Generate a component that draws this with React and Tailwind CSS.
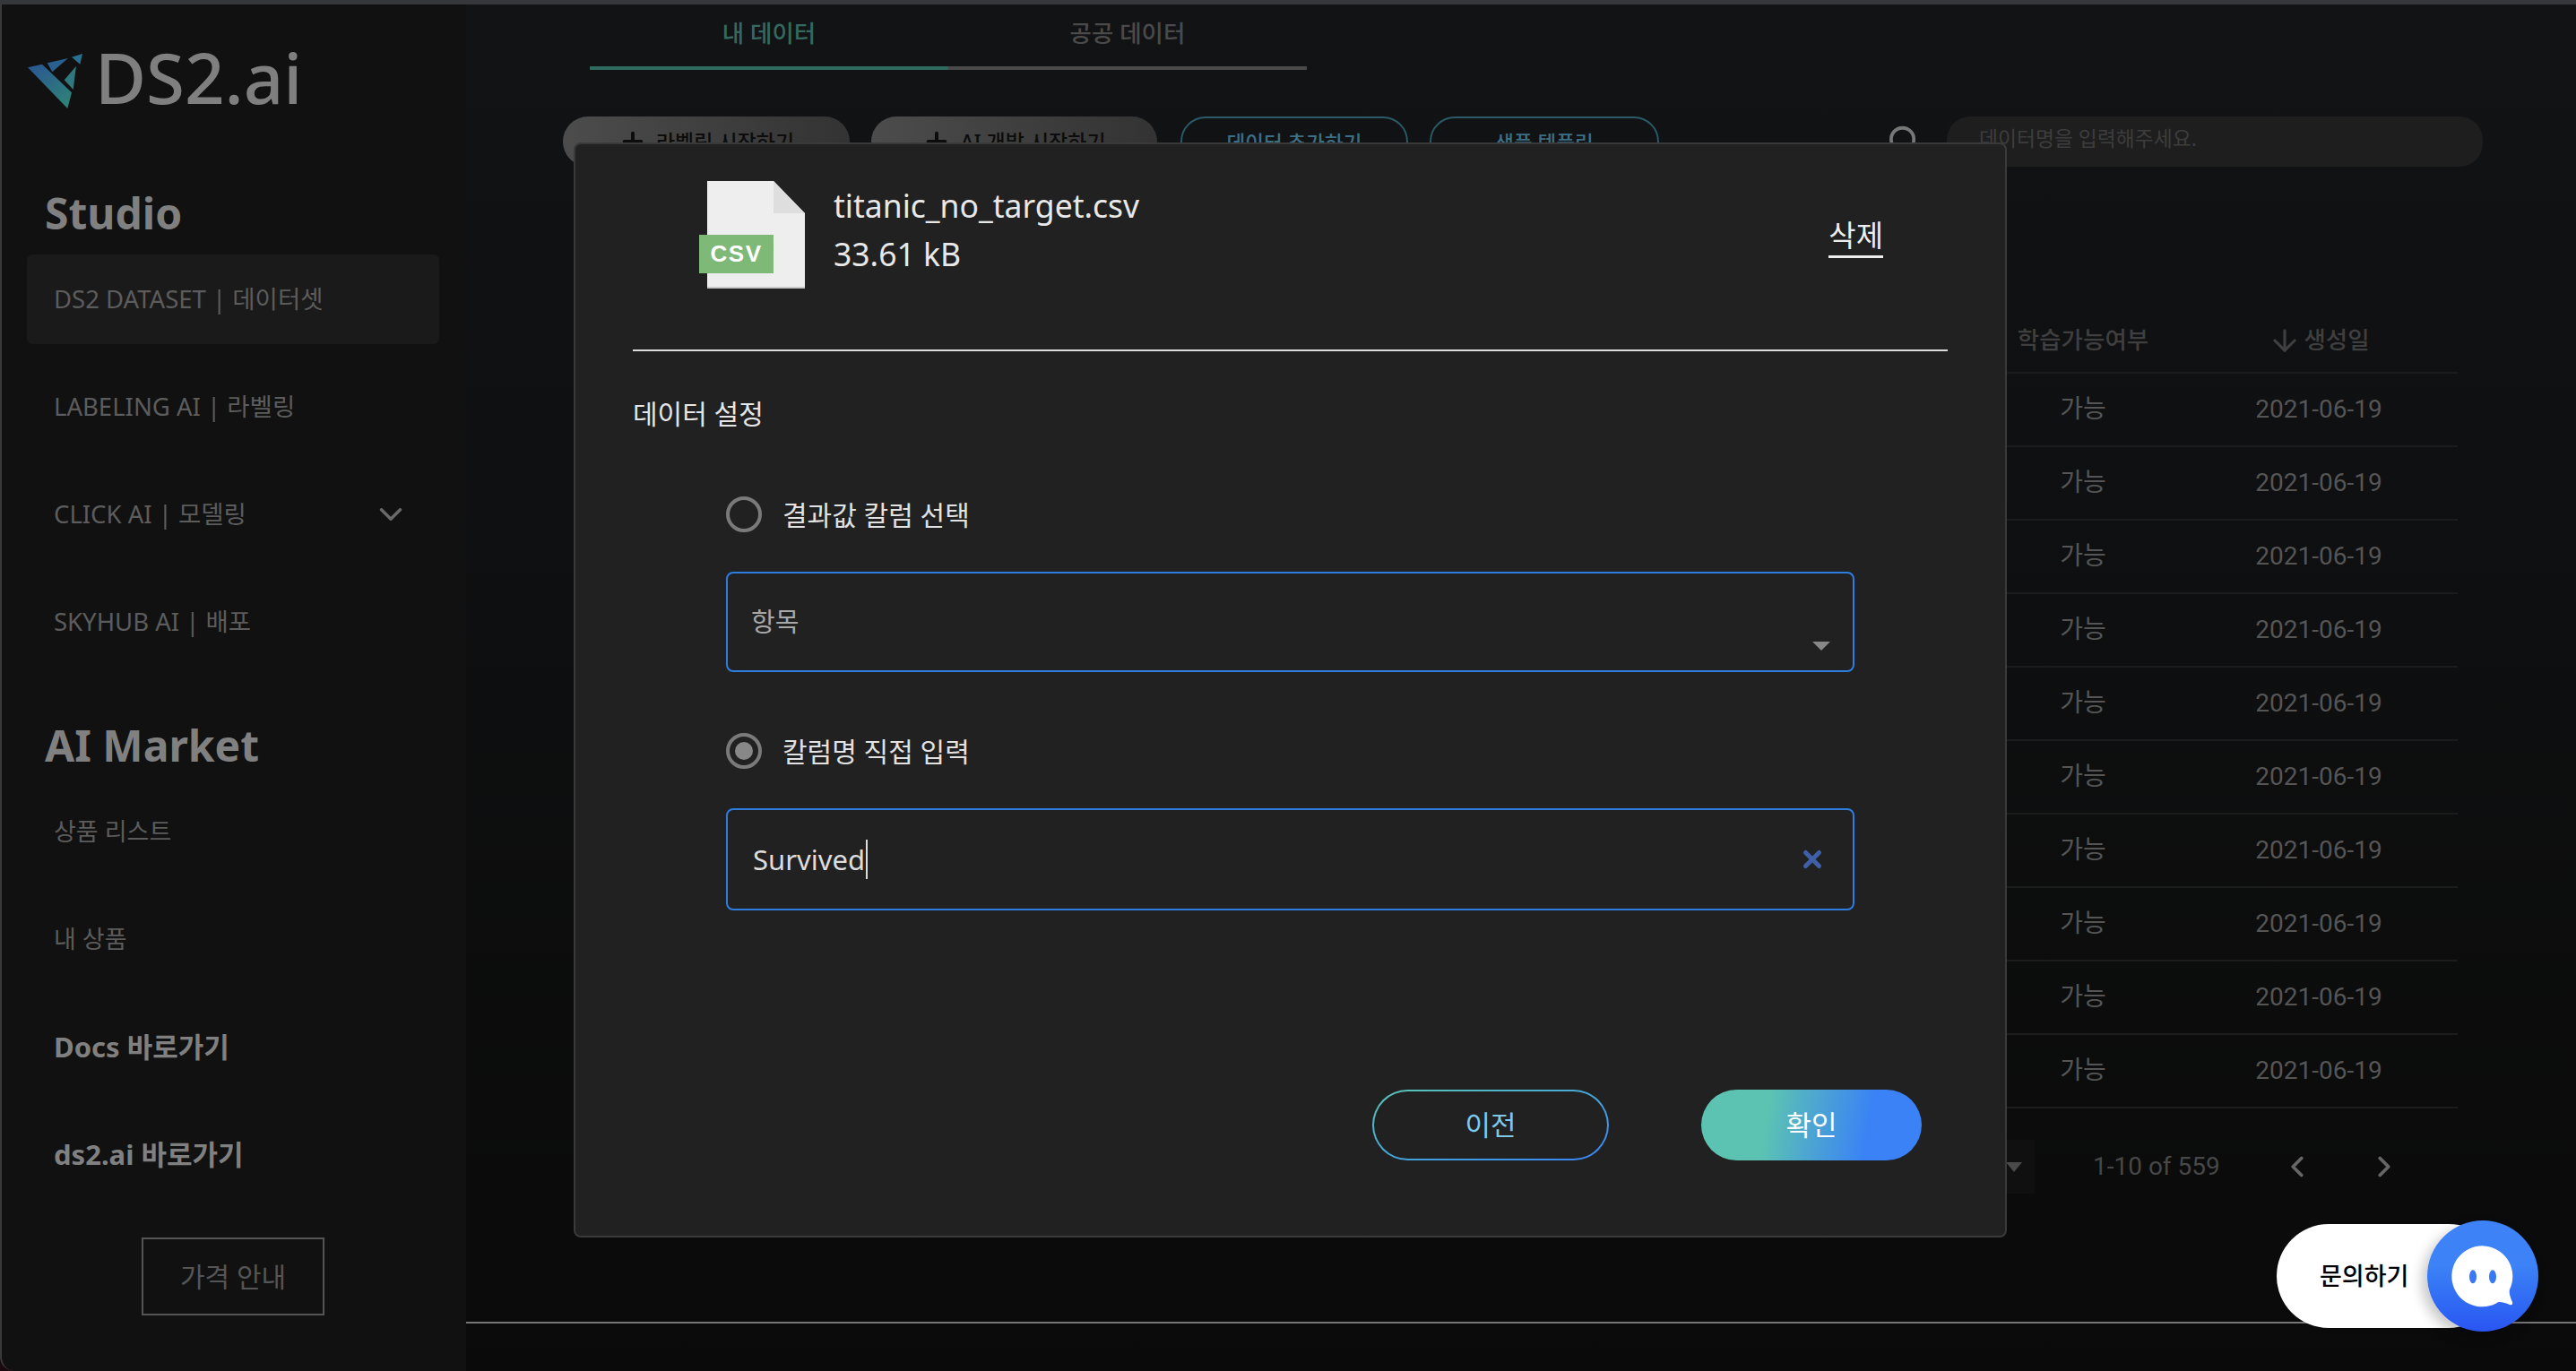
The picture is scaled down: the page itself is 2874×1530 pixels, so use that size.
import { ArrowDown, ChevronDown, ChevronLeft, ChevronRight, Plus, Search, X } from 'lucide-react';

const FONT = "font-['Noto_Sans','Noto_Sans_CJK_KR',sans-serif]";

const navTop = [
  { label: 'DS2 DATASET | 데이터셋', active: true },
  { label: 'LABELING AI | 라벨링' },
  { label: 'CLICK AI | 모델링', arrow: true },
  { label: 'SKYHUB AI | 배포' },
];

const Logo = () => (
  <svg width="64" height="62" viewBox="29 58 64 62" className="shrink-0">
    <defs>
      <linearGradient id="logoGrad" x1="0" y1="0" x2="0.7" y2="1">
        <stop offset="0" stopColor="#2a5594" />
        <stop offset="1" stopColor="#2f8079" />
      </linearGradient>
    </defs>
    <polygon points="30,74.3 46,70.7 79,102.3 74.3,120" fill="url(#logoGrad)" />
    <polygon points="51.7,69.3 75,64 57.3,79.3" fill="#2a6090" />
    <polygon points="79,62.7 91,59 88.3,70.7" fill="#2a7090" />
    <polygon points="84,72.7 80.7,99 70.7,88.3" fill="#2f7880" />
  </svg>
);

const Sidebar = () => (
  <aside className="w-[520px] shrink-0 h-full bg-[#111111] border-l-2 border-[#3a3a3a] rounded-bl-[16px] flex flex-col pl-[28px]">
    <div className="flex items-center h-[62px] mt-[54px] gap-[12px]">
      <Logo />
      <span className="text-[78px] leading-none font-medium text-[#7f7f7f] mt-[-8px]">DS2.ai</span>
    </div>
    <h2 className="text-[48px] leading-[64px] font-bold text-[#808080] ml-[20px] mt-[85px]">Studio</h2>
    <nav className="flex flex-col mt-[14px]">
      {navTop.map((item) => (
        <div
          key={item.label}
          className={`w-[460px] h-[100px] mb-[20px] px-[30px] rounded-[6px] flex items-center justify-between text-[27.5px] text-[#5c5c5c] ${item.active ? 'bg-[#1a1a1a]' : ''}`}
        >
          <span>{item.label}</span>
          {item.arrow && <ChevronDown size={42} strokeWidth={2} className="text-[#6a6a6a] mr-[3px]" />}
        </div>
      ))}
    </nav>
    <h2 className="text-[48px] leading-[64px] font-bold text-[#808080] ml-[20px] mt-[36px]">AI Market</h2>
    <div className="flex flex-col mt-[4px] ml-[30px] text-[27px] text-[#5c5c5c]">
      <div className="h-[120px] flex items-center">상품 리스트</div>
      <div className="h-[120px] flex items-center">내 상품</div>
      <div className="h-[120px] flex items-center text-[31px] font-bold text-[#808080]">Docs 바로가기</div>
      <div className="h-[120px] flex items-center text-[31px] font-bold text-[#808080]">ds2.ai 바로가기</div>
    </div>
    <button className="w-[204px] h-[87px] ml-[128px] mt-[33px] border-2 border-[#555555] text-[30px] text-[#555555]">
      가격 안내
    </button>
  </aside>
);

const GrayAction = ({ width, label }) => (
  <button className={`${width} h-[56px] rounded-[28px] bg-gradient-to-r from-[#4c4c4c] to-[#333333] flex items-start justify-center gap-[10px] pt-[12px] text-[23px] leading-[32px] font-medium text-[#0c0c0c]`}>
    <Plus size={32} strokeWidth={3} />
    <span>{label}</span>
  </button>
);

const OutlineAction = ({ width, label }) => (
  <button className={`${width} h-[56px] rounded-[28px] border-2 border-[#2a5a68] flex items-start justify-center pt-[12px] text-[22.5px] leading-[32px] font-medium text-[#3c6f85]`}>
    {label}
  </button>
);

const Table = () => (
  <div className="ml-[160px] mr-[132px] mt-[159px]">
    <div className="flex h-[72px] border-b-2 border-[#1c1c1c] text-[26.5px] text-[#3f3f3f] font-medium">
      <div className="flex-1" />
      <div className="w-[220px] flex items-center justify-center">학습가능여부</div>
      <div className="w-[308px] flex items-center justify-center gap-[2px] pr-[2px]">
        <ArrowDown size={38} strokeWidth={2} />
        <span>생성일</span>
      </div>
    </div>
    {Array.from({ length: 10 }).map((_, i) => (
      <div key={i} className="flex h-[82px] border-b-2 border-[#1c1c1c] text-[28px] text-[#555555] font-['Roboto','Noto_Sans_CJK_KR',sans-serif]">
        <div className="flex-1" />
        <div className="w-[220px] flex items-center justify-center">가능</div>
        <div className="w-[308px] flex items-center justify-center pr-[2px]">2021-06-19</div>
      </div>
    ))}
  </div>
);

const Pagination = () => (
  <div className="flex items-center h-[60px] mt-[35px] ml-[1500px] font-['Roboto',sans-serif] text-[28px] text-[#474747]">
    <div className="w-[250px] h-[60px] bg-[#101010] flex items-center justify-end pr-[14px]">
      <div className="w-0 h-0 border-x-[9px] border-x-transparent border-t-[11px] border-t-[#4a4a4a]" />
    </div>
    <span className="ml-[65px] w-[140px] whitespace-nowrap">1-10 of 559</span>
    <ChevronLeft size={38} strokeWidth={2.4} className="text-[#666666] ml-[69px]" />
    <ChevronRight size={38} strokeWidth={2.4} className="text-[#666666] ml-[59px]" />
  </div>
);

const FileIcon = () => (
  <div className="relative w-[118px] h-[120px] shrink-0">
    <svg width="118" height="120" viewBox="0 0 118 120" className="absolute inset-0">
      <polygon points="9,0 83,0 118,36 118,120 9,120" fill="#eeeeee" />
      <polygon points="83,0 118,36 83,36" fill="#dedede" />
      <rect x="9" y="118" width="109" height="2" fill="#c9c9c9" />
      <rect x="0" y="60" width="83" height="43" fill="#7eb978" />
    </svg>
    <span className="absolute left-0 top-[60px] w-[83px] h-[43px] flex items-center justify-center text-[26px] font-bold text-white font-['Liberation_Sans',sans-serif] tracking-[1.5px]">
      CSV
    </span>
  </div>
);

const Radio = ({ checked, label }) => (
  <div className="flex items-center gap-[23px] h-[40px]">
    <div className="w-[40px] h-[40px] rounded-full border-4 border-[#7a7a7a] flex items-center justify-center">
      {checked && <div className="w-[20px] h-[20px] rounded-full bg-[#888888]" />}
    </div>
    <span className="text-[30px] text-[#e2e2e2]">{label}</span>
  </div>
);

const Modal = () => (
  <div className="absolute left-[640px] top-[159px] w-[1599px] h-[1222px] bg-[#212121] border-2 border-[#3a3a3a] rounded-[8px] flex flex-col">
    <div className="flex items-center h-[231px] border-b-2 border-[#dcdcdc] mx-[64px] pl-[74px] pr-[72px] pb-[27px]">
      <FileIcon />
      <div className="ml-[32px] mt-[-13px] flex flex-col text-[#e8e8e8] text-[35.5px] leading-[54px]">
        <span>titanic_no_target.csv</span>
        <span>33.61 kB</span>
      </div>
      <span className="ml-auto text-[33px] leading-[40px] text-[#eeeeee] border-b-[3px] border-[#eeeeee] pb-[2px] mt-[7px]">삭제</span>
    </div>
    <div className="ml-[64px] mt-[48px] text-[30px] leading-[44px] text-[#e6e6e6]">데이터 설정</div>
    <div className="mx-[168px] mt-[70px] flex flex-col">
      <Radio label="결과값 칼럼 선택" />
      <div className="relative h-[112px] mt-[44px] border-2 border-[#2f7de1] rounded-[8px] flex items-center pl-[26px] text-[29px] text-[#a8a8a8]">
        항목
        <div className="absolute right-[25px] bottom-[22px] w-0 h-0 border-x-[10px] border-x-transparent border-t-[10px] border-t-[#888888]" />
      </div>
      <div className="mt-[68px]"><Radio checked label="칼럼명 직접 입력" /></div>
      <div className="h-[114px] mt-[44px] border-2 border-[#2f7de1] rounded-[8px] flex items-center justify-between pl-[28px] pr-[30px] text-[31px] text-[#dddddd]">
        <div className="flex items-center">
          <span>Survived</span>
          <span className="w-[2px] h-[44px] bg-[#dddddd] ml-[1px]" />
        </div>
        <X size={30} strokeWidth={4} className="text-[#3f5fa8]" />
      </div>
    </div>
    <div className="flex justify-end gap-[103px] mt-[200px] mr-[93px]">
      <div className="w-[264px] h-[79px] rounded-full p-[2px] bg-gradient-to-br from-[#5cc5b5] to-[#3b82f6]">
        <button className="w-full h-full rounded-full bg-[#212121] text-[31px] text-[#7cc9ee]">이전</button>
      </div>
      <button className="w-[246px] h-[79px] rounded-full bg-[linear-gradient(100deg,#5cc3b2_30%,#3a82f6_75%)] text-[31px] text-white">확인</button>
    </div>
  </div>
);

const ChatWidget = () => (
  <div className="absolute left-[2540px] top-[1362px] w-[292px] h-[124px] flex items-center">
    <div className="w-[250px] h-[116px] rounded-full bg-white flex items-center pl-[48px] text-[27px] font-medium text-black">문의하기</div>
    <div className="absolute right-0 top-0 w-[124px] h-[124px] rounded-full bg-gradient-to-b from-[#3d82f6] from-40% to-[#2a55f2] shadow-[-6px_6px_14px_rgba(0,0,0,0.22)] flex items-center justify-center">
      <svg width="72" height="72" viewBox="0 0 72 72">
        <path d="M66 51A34 34 0 1 0 51 66.5C55 63 60 66 66 68Q70 69 69 65C67 60 65 56 66 51Z" fill="#ffffff" />
        <ellipse cx="25" cy="36.7" rx="4" ry="7.5" fill="#3b78f5" />
        <ellipse cx="47" cy="36.7" rx="4" ry="7.5" fill="#3b78f5" />
      </svg>
    </div>
  </div>
);

const App = () => (
  <div className={`relative w-[2874px] h-[1530px] overflow-hidden bg-[#35373a] flex flex-col ${FONT}`}>
    <div className="h-[5px] shrink-0" />
    <div className="flex-1 flex min-h-0 bg-[#1a0a10]">
      <Sidebar />
      <main className="flex-1 flex flex-col bg-gradient-to-b from-[#121315] to-[#0a0a0a]">
        <div className="flex ml-[138px] w-[800px] text-[26.5px] font-medium">
          <div className="w-[400px] h-[73px] pb-[3px] border-b-4 border-[#2f6b60] text-[#35695f] flex items-center justify-center">내 데이터</div>
          <div className="w-[400px] h-[73px] pb-[3px] border-b-4 border-[#4a4a4a] text-[#4a4a4a] flex items-center justify-center">공공 데이터</div>
        </div>
        <div className="flex items-start mt-[52px] ml-[108px] mr-[104px] h-[56px]">
          <GrayAction width="w-[320px]" label="라벨링 시작하기" />
          <div className="ml-[24px]"><GrayAction width="w-[319px]" label="AI 개발 시작하기" /></div>
          <div className="ml-[26px]"><OutlineAction width="w-[254px]" label="데이터 추가하기" /></div>
          <div className="ml-[24px]"><OutlineAction width="w-[256px]" label="샘플 템플릿" /></div>
          <Search size={38} strokeWidth={2.4} className="ml-auto mt-[8px] mr-[32px] text-[#777777] scale-x-[-1]" />
          <div className="w-[598px] h-[56px] rounded-[26px] bg-[#1e1e1e] flex items-center pl-[36px] pb-[5px] text-[22.8px] text-[#3d3d3d]">데이터명을 입력해주세요.</div>
        </div>
        <Table />
        <Pagination />
        <div className="mt-[143px] h-[2px] bg-[#777777]" />
      </main>
    </div>
    <Modal />
    <ChatWidget />
  </div>
);

export default App;
